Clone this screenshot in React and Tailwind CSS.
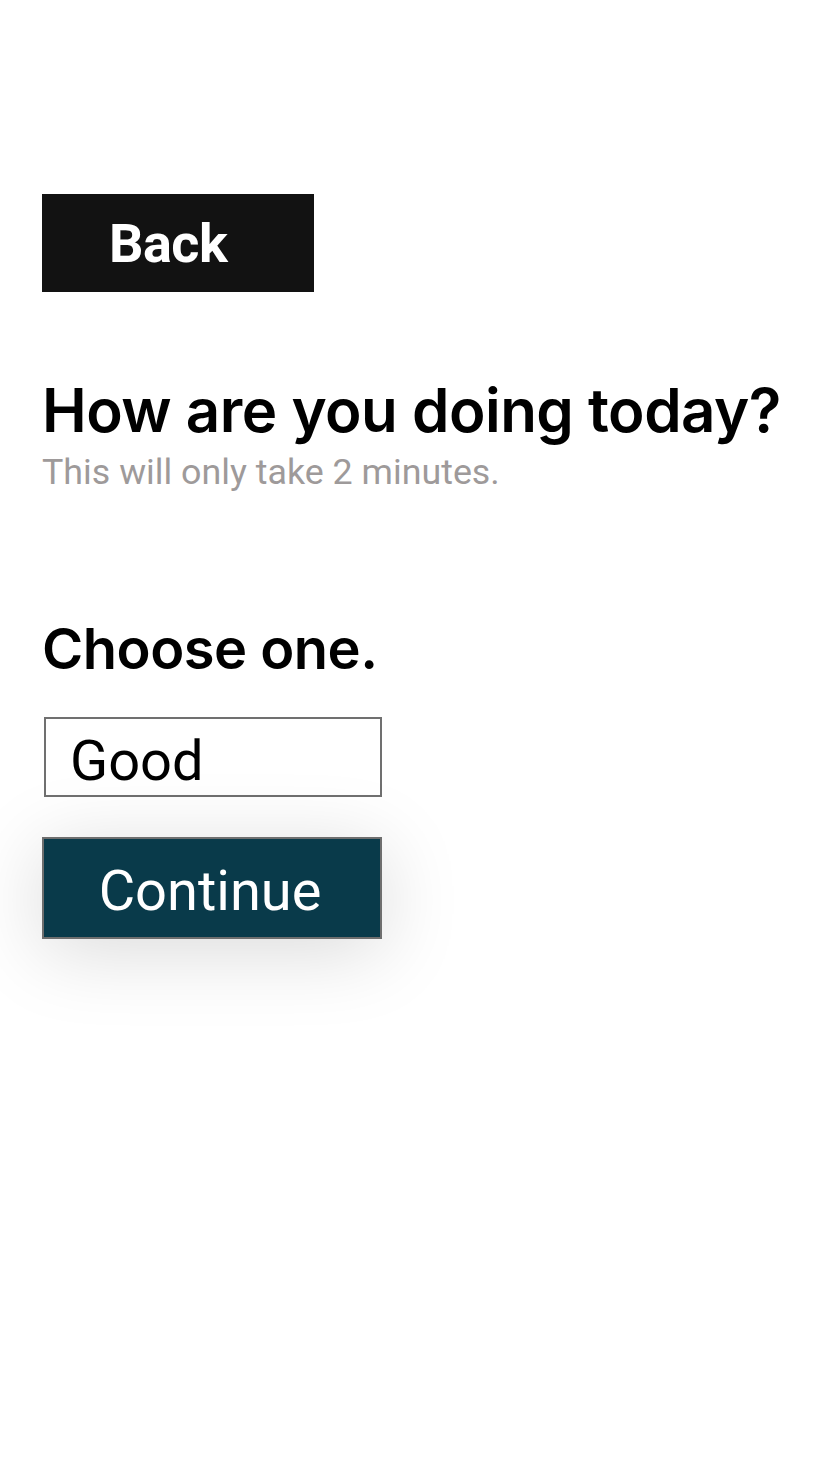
export default function App() {
  return (
    <div className="min-h-[1472px] bg-white px-[42px] pt-[194px]">
      {/* Back */}
      <button className="flex h-[98px] w-[272px] items-center bg-[#121212] pl-[67px] text-[54px] font-bold tracking-[-0.5px] text-white [font-family:Roboto,sans-serif]">
        Back
      </button>

      {/* Heading */}
      <div className="mt-[82px]">
        <h1 className="text-[60px] font-semibold leading-[72px] tracking-[-0.5px] text-black [font-family:Inter,sans-serif]">
          How are you doing today?
        </h1>
        <p className="mt-[6px] text-[35.8px] leading-[40px] text-[#9e9a9a] [font-family:Roboto,sans-serif]">
          This will only take 2 minutes.
        </p>
      </div>

      {/* Choice */}
      <h2 className="mt-[122px] text-[56px] font-semibold leading-[70px] tracking-[-0.5px] text-black [font-family:Inter,sans-serif]">
        Choose one.
      </h2>

      <div className="mt-[33px] ml-[2px] flex h-[80px] w-[338px] items-center border-2 border-[#707070] pl-[24px] pt-[8px] text-[56px] text-black [font-family:Roboto,sans-serif]">
        Good
      </div>

      <button className="mt-[40px] flex h-[102px] w-[340px] items-center justify-center border-2 border-[#6e6e6e] bg-[#093a4a] pt-[6px] pr-[4px] text-[56px] text-white shadow-[0_12px_80px_rgba(0,0,0,0.15)] [font-family:Roboto,sans-serif]">
        Continue
      </button>
    </div>
  );
}
